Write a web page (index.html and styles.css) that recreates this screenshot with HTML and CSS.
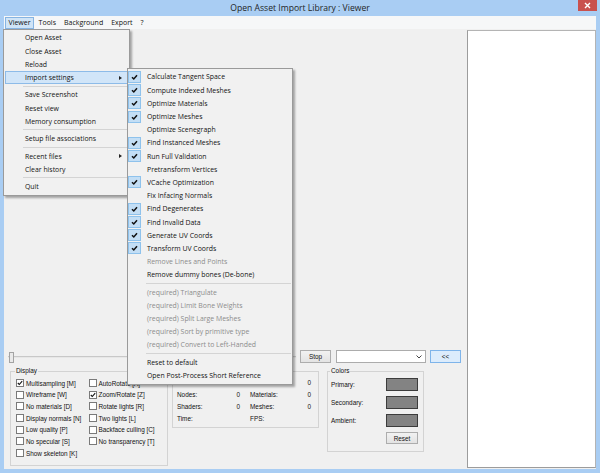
FILE: index.html
```html
<!DOCTYPE html>
<html>
<head>
<meta charset="utf-8">
<link rel="stylesheet" href="styles.css">
</head>
<body>
<div class="window">
  <div class="titlebar">
    <span class="title">Open Asset Import Library : Viewer</span>
    <span class="close"><svg width="7" height="7" viewBox="0 0 7 7"><path d="M1 1L6 6M6 1L1 6" stroke="#fff" stroke-width="1.4"/></svg></span>
  </div>
  <div class="menubar">
    <span class="mb-item active">Viewer</span>
    <span class="mb-item">Tools</span>
    <span class="mb-item">Background</span>
    <span class="mb-item">Export</span>
    <span class="mb-item">?</span>
  </div>
  <div class="client">
    <div class="left">
      <div class="viewport"></div>
      <div class="controls">
        <div class="slider"><span class="thumb"></span></div>
        <span class="btn stop">Stop</span>
        <span class="combo"><svg width="6" height="4" viewBox="0 0 6 4"><path d="M0.5 0.5L3 3L5.5 0.5" stroke="#444" fill="none" stroke-width="1"/></svg></span>
        <span class="btn default">&lt;&lt;</span>
      </div>
      <div class="groups">
        <fieldset class="group display">
          <legend>Display</legend>
          <div class="cbgrid">
            <label class="cb"><span class="box"><svg width="6" height="6" viewBox="0 0 6 6"><path d="M0.8 3L2.3 4.5L5.2 1.2" stroke="#111" stroke-width="1.1" fill="none"/></svg></span>Multisampling [M]</label>
            <label class="cb"><span class="box"></span>AutoRotate [A]</label>
            <label class="cb"><span class="box"></span>Wireframe [W]</label>
            <label class="cb"><span class="box"><svg width="6" height="6" viewBox="0 0 6 6"><path d="M0.8 3L2.3 4.5L5.2 1.2" stroke="#111" stroke-width="1.1" fill="none"/></svg></span>Zoom/Rotate [Z]</label>
            <label class="cb"><span class="box"></span>No materials [D]</label>
            <label class="cb"><span class="box"></span>Rotate lights [R]</label>
            <label class="cb"><span class="box"></span>Display normals [N]</label>
            <label class="cb"><span class="box"></span>Two lights [L]</label>
            <label class="cb"><span class="box"></span>Low quality [P]</label>
            <label class="cb"><span class="box"></span>Backface culling [C]</label>
            <label class="cb"><span class="box"></span>No specular [S]</label>
            <label class="cb"><span class="box"></span>No transparency [T]</label>
            <label class="cb"><span class="box"></span>Show skeleton [K]</label>
          </div>
        </fieldset>
        <fieldset class="group stats">
          <legend></legend>
          <div class="statgrid">
            <div class="stat"><span>Verts:</span><span>0</span></div>
            <div class="stat"><span>Faces:</span><span>0</span></div>
            <div class="stat"><span>Nodes:</span><span>0</span></div>
            <div class="stat"><span>Materials:</span><span>0</span></div>
            <div class="stat"><span>Shaders:</span><span>0</span></div>
            <div class="stat"><span>Meshes:</span><span>0</span></div>
            <div class="stat"><span>Time:</span><span></span></div>
            <div class="stat"><span>FPS:</span><span></span></div>
          </div>
        </fieldset>
        <fieldset class="group colors">
          <legend>Colors</legend>
          <div class="colgrid">
            <span class="clabel">Primary:</span><span class="swatch"></span>
            <span class="clabel">Secondary:</span><span class="swatch"></span>
            <span class="clabel">Ambient:</span><span class="swatch"></span>
            <span></span><span class="btn reset">Reset</span>
          </div>
        </fieldset>
      </div>
    </div>
    <div class="panel"></div>
  </div>

  <div class="menu dropdown">
    <div class="mi">Open Asset</div>
    <div class="mi">Close Asset</div>
    <div class="mi">Reload</div>
    <div class="mi hot">Import settings<span class="arrow"></span></div>
    <div class="sep"></div>
    <div class="mi">Save Screenshot</div>
    <div class="mi">Reset view</div>
    <div class="mi">Memory consumption</div>
    <div class="sep"></div>
    <div class="mi">Setup file associations</div>
    <div class="sep"></div>
    <div class="mi">Recent files<span class="arrow"></span></div>
    <div class="mi">Clear history</div>
    <div class="sep"></div>
    <div class="mi">Quit</div>
  </div>

  <div class="menu submenu">
    <div class="si"><span class="chk on"></span>Calculate Tangent Space</div>
    <div class="si"><span class="chk on"></span>Compute Indexed Meshes</div>
    <div class="si"><span class="chk on"></span>Optimize Materials</div>
    <div class="si"><span class="chk on"></span>Optimize Meshes</div>
    <div class="si"><span class="chk"></span>Optimize Scenegraph</div>
    <div class="si"><span class="chk on"></span>Find Instanced Meshes</div>
    <div class="si"><span class="chk on"></span>Run Full Validation</div>
    <div class="si"><span class="chk"></span>Pretransform Vertices</div>
    <div class="si"><span class="chk on"></span>VCache Optimization</div>
    <div class="si"><span class="chk"></span>Fix Infacing Normals</div>
    <div class="si"><span class="chk on"></span>Find Degenerates</div>
    <div class="si"><span class="chk on"></span>Find Invalid Data</div>
    <div class="si"><span class="chk on"></span>Generate UV Coords</div>
    <div class="si"><span class="chk on"></span>Transform UV Coords</div>
    <div class="si dis"><span class="chk"></span>Remove Lines and Points</div>
    <div class="si"><span class="chk"></span>Remove dummy bones (De-bone)</div>
    <div class="ssep"></div>
    <div class="si dis"><span class="chk"></span>(required) Triangulate</div>
    <div class="si dis"><span class="chk"></span>(required) Limit Bone Weights</div>
    <div class="si dis"><span class="chk"></span>(required) Split Large Meshes</div>
    <div class="si dis"><span class="chk"></span>(required) Sort by primitive type</div>
    <div class="si dis"><span class="chk"></span>(required) Convert to Left-Handed</div>
    <div class="ssep"></div>
    <div class="si"><span class="chk"></span>Reset to default</div>
    <div class="si"><span class="chk"></span>Open Post-Process Short Reference</div>
  </div>
</div>
</body>
</html>
```

FILE: styles.css
```css
* { box-sizing: border-box; }
body {
  margin: 0;
  font-family: "Open Sans", "Noto Sans", sans-serif;
  color: #111;
}
.window {
  position: relative;
  width: 600px;
  height: 473px;
  background: #a9cdf3;
  padding: 0 4px 4px;
  display: flex;
  flex-direction: column;
}
.titlebar {
  height: 16px;
  flex: none;
  display: grid;
  grid-template-columns: 1fr auto 1fr;
  align-items: start;
}
.title {
  grid-column: 2;
  font-size: 8.6px;
  line-height: 16px;
  color: #1f1f1f;
  white-space: nowrap;
}
.close {
  grid-column: 3;
  justify-self: end;
  margin-right: -1px;
  width: 19px;
  height: 11px;
  background: #c9514e;
  display: flex;
  align-items: center;
  justify-content: center;
}
.menubar {
  height: 13px;
  flex: none;
  background: #f6f7f8;
  display: flex;
  align-items: flex-end;
  padding-left: 1px;
  font-size: 7px;
}
.mb-item {
  height: 12px;
  line-height: 10.5px;
  padding: 0 2.5px;
  margin-right: 1px;
  border: 1px solid transparent;
  white-space: nowrap;
}
.mb-item.active {
  background: #cfe4f7;
  border-color: #86b4e2;
}
.client {
  flex: 1;
  display: flex;
  background: #f0f0f0;
  min-height: 0;
}
.left {
  flex: 1;
  display: flex;
  flex-direction: column;
  padding: 0 6px 3px 4px;
  font-family: "Liberation Sans", Arial, sans-serif;
  font-size: 6.4px;
}
.viewport { flex: 1; }
.controls {
  display: flex;
  align-items: center;
  height: 13px;
  margin-bottom: 4px;
}
.slider {
  flex: 1;
  height: 13px;
  display: flex;
  align-items: center;
  background: linear-gradient(#f0f0f0 6px, #c8c8c8 6px, #c8c8c8 7px, #e7e7e7 7px, #e7e7e7 8px, #f0f0f0 8px);
}
.thumb {
  width: 5px;
  height: 11px;
  margin-left: 1px;
  margin-top: 2px;
  background: #e9e9e9;
  border: 1px solid #a3a3a3;
}
.btn {
  height: 13px;
  display: flex;
  align-items: center;
  justify-content: center;
  border: 1px solid #adadad;
  background: linear-gradient(#f2f2f2, #e3e3e3);
  white-space: nowrap;
}
.stop { width: 31px; margin-left: 4px; }
.combo {
  width: 90px;
  height: 13px;
  margin-left: 5px;
  background: #fff;
  border: 1px solid #acacac;
  display: flex;
  align-items: center;
  justify-content: flex-end;
  padding-right: 3px;
}
.default {
  width: 31px;
  margin-left: 4px;
  background: #dcecfc;
  border-color: #7eb4ea;
}
.groups {
  display: flex;
  align-items: flex-start;
  padding-left: 2px;
}
.group {
  margin: 0;
  min-width: 0;
  border: 1px solid #d3d3d3;
}
.group legend {
  padding: 0 1px;
  margin-left: -1px;
  line-height: 8px;
  height: 8px;
  font-size: 6.4px;
}
.display {
  width: 158px;
  padding: 2.2px 2px 6px 5px;
}
.cbgrid {
  display: grid;
  grid-template-columns: 72.5px 1fr;
  grid-auto-rows: 11.7px;
}
.cb {
  display: flex;
  align-items: center;
  white-space: nowrap;
}
.box {
  width: 8px;
  height: 8px;
  border: 1px solid #7a7a7a;
  background: #fff;
  margin-right: 2px;
  flex: none;
  display: flex;
  align-items: center;
  justify-content: center;
}
.stats {
  width: 147px;
  margin-left: 4px;
  padding: 1.4px 7px 3px 4px;
}
.stats legend {
  padding: 0;
  width: 0;
}
.statgrid {
  display: grid;
  grid-template-columns: 63px 61px;
  column-gap: 10px;
  grid-auto-rows: 11.9px;
}
.stat {
  display: flex;
  justify-content: space-between;
  align-items: center;
}
.colors {
  width: 97px;
  margin-left: 8px;
  padding: 3px 5px 7px 3px;
}
.colgrid {
  display: grid;
  grid-template-columns: 1fr 32px;
  row-gap: 5px;
  align-items: center;
}
.clabel { line-height: 13px; }
.swatch {
  height: 13px;
  background: #838383;
  border: 1px solid #3c3c3c;
}
.reset { height: 12px; }
.panel {
  width: 129px;
  margin: 1px 0;
  background: #fff;
  border: 1px solid #b4b4b4;
  border-left-color: #9c9c9c;
  border-bottom-color: #9c9c9c;
}

/* popup menus */
.menu {
  position: absolute;
  background: #f1f1f1;
  border: 1px solid #9a9a9a;
  box-shadow: 2px 2px 2px rgba(0, 0, 0, 0.32);
  font-size: 6.9px;
  padding: 1.4px 0 2px;
  color: #111;
}
.dropdown {
  left: 3px;
  top: 29px;
  width: 127px;
}
.mi {
  height: 13.2px;
  margin: 0 1px;
  padding-left: 19px;
  border: 1px solid transparent;
  display: flex;
  align-items: center;
  white-space: nowrap;
}
.mi.hot {
  background: #d1e5f8;
  border-color: #8dbbe8;
}
.arrow {
  margin-left: auto;
  margin-right: 5px;
  width: 0;
  height: 0;
  border-top: 2.5px solid transparent;
  border-bottom: 2.5px solid transparent;
  border-left: 3px solid #222;
}
.sep {
  height: 1px;
  margin: 1.6px 1px 1.6px 19px;
  background: #d4d4d4;
}
.submenu {
  left: 127px;
  top: 68px;
  width: 166px;
}
.si {
  height: 13.2px;
  display: flex;
  align-items: center;
  white-space: nowrap;
}
.si.dis { color: #8c8c8c; }
.chk {
  width: 13px;
  height: 12px;
  margin-right: 6px;
  flex: none;
}
.chk.on {
  background: #c3def5 url("data:image/svg+xml,%3Csvg xmlns='http://www.w3.org/2000/svg' width='13' height='12' viewBox='0 0 13 12'%3E%3Cpath d='M4 6.2L5.8 8L9 4.2' stroke='%23111' stroke-width='1.5' fill='none'/%3E%3C/svg%3E") no-repeat center;
  border: 1px solid #8ec2ec;
}
.ssep {
  height: 1px;
  margin: 1.6px 1px 1.6px 18px;
  background: #d4d4d4;
}
```
